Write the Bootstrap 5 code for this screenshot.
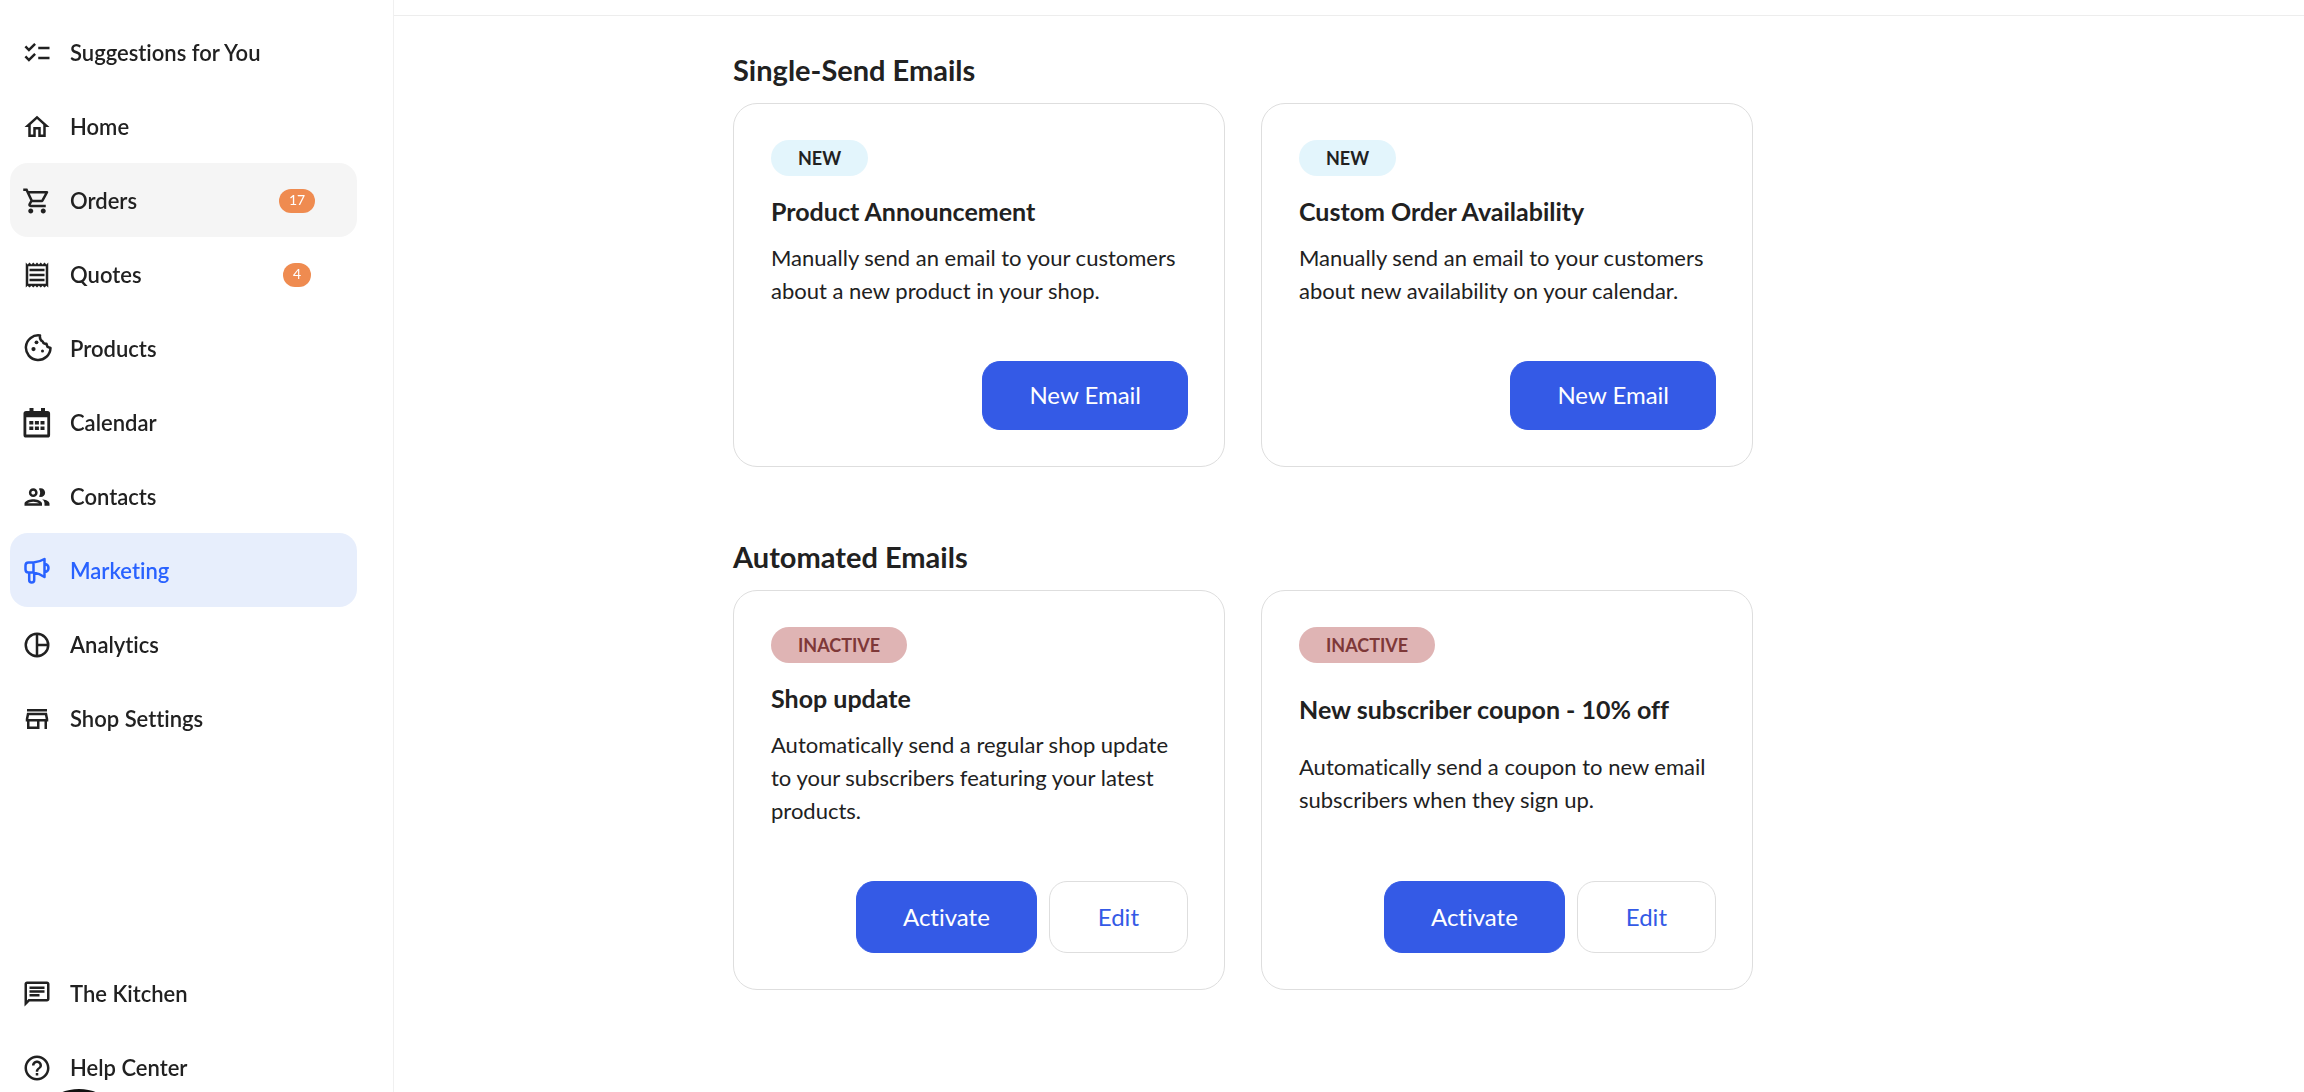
<!DOCTYPE html>
<html lang="en">
<head>
<meta charset="utf-8">
<meta name="viewport" content="width=device-width, initial-scale=1">
<title>Marketing</title>
<link rel="stylesheet" href="https://cdn.jsdelivr.net/npm/bootstrap@5.3.0/dist/css/bootstrap.min.css">
<style>
body,button{font-variant-ligatures:none}
body{font-family:Lato,"Open Sans",sans-serif;color:#212121;background:#fff}
.side-col{width:394px;border-right:1px solid #f0f0f0;padding-top:15px}
.side-link{height:74px;margin-left:10px;margin-right:36px;padding-top:2px;padding-left:12px;padding-right:30px;gap:18px;border-radius:18px;font-size:22px;font-weight:600;line-height:28px;color:#212121;text-decoration:none}
.side-link:hover,.side-link.is-hover{background:#f5f5f5}
.side-link.is-current{background:#e7eefc;color:#2962ff}
.side-link svg{width:30px;height:30px;flex:none;fill:currentColor}
.side-link .line{fill:none;stroke:currentColor;stroke-linejoin:round}
.count-slot{width:60px}
.count-pill{background:#ef8b50;color:#fff;font-size:14px;font-weight:400;line-height:22px;padding:0 10px 2px;border-radius:12px}
.side-foot{margin-bottom:-12px}
.top-bar{height:16px;border-bottom:1px solid #ededed}
.page-wrap{max-width:1232px;padding:36px 0}
.mail-grid{max-width:1020px}
.mail-section + .mail-section{margin-top:72px}
.mail-section h2{font-size:29px;font-weight:700;line-height:36px;margin-bottom:15px}
.mail-row{--bs-gutter-x:36px}
.mail-card{border:1px solid #dedede;border-radius:24px;padding:36px 36px 36px 37px}
.mail-tag{font-size:18px;font-weight:700;line-height:36px;padding:0 27px;border-radius:18px}
.tag-new{background:#e3f5fc}
.tag-off{background:#dfb4b4;color:#7e3838}
.mail-card h3{font-size:25px;font-weight:700;line-height:30px;margin:20px 0 0}
.mail-card p{font-size:22px;line-height:33px;margin:15px 0 0}
.mail-actions{margin-top:54px;gap:12px}
.mail-btn{font-size:24px;line-height:34px;border-radius:18px;padding:18px 48px;border:1px solid #dedede;color:#345ae6}
.mail-btn.is-main{background:#345ae6;border-color:#345ae6;color:#fff;padding-left:46px;padding-right:46px}
.mail-btn.is-low{padding-top:16px;padding-bottom:17px}
.help-bubble{position:fixed;left:31px;bottom:-93px;width:96px;height:96px;border:0;border-radius:50%;background:#111}
</style>
<script src="https://cdn.jsdelivr.net/npm/bootstrap@5.3.0/dist/js/bootstrap.bundle.min.js"></script>
</head>
<body>
<div class="d-flex min-vh-100">
  <nav class="side-col vh-100 sticky-top overflow-hidden flex-shrink-0 d-flex flex-column" aria-label="Main">
    <div class="d-flex flex-column">
      <a href="#" class="side-link d-flex align-items-center"><svg viewBox="0 0 24 24"><path d="M22 7h-9v2h9V7zm0 8h-9v2h9v-2zM5.54 11 2 7.46l1.41-1.41 2.12 2.12 4.24-4.24 1.41 1.41L5.54 11zm0 8L2 15.46l1.41-1.41 2.12 2.12 4.24-4.24 1.41 1.41L5.54 19z"/></svg>Suggestions for You</a>
      <a href="#" class="side-link d-flex align-items-center"><svg viewBox="0 0 24 24"><path d="M12 5.69l5 4.5V18h-2v-6H9v6H7v-7.81l5-4.5M12 3L2 12h3v8h6v-6h2v6h6v-8h3L12 3z"/></svg>Home</a>
      <a href="#" class="side-link is-hover d-flex align-items-center"><svg viewBox="0 0 24 24"><path d="M15.55 13c.75 0 1.41-.41 1.75-1.03l3.58-6.49c.37-.66-.11-1.48-.87-1.48H5.21l-.94-2H1v2h2l3.6 7.59-1.35 2.44C4.52 15.37 5.48 17 7 17h12v-2H7l1.1-2h7.45zM6.16 6h12.15l-2.76 5H8.53L6.16 6zM7 18c-1.1 0-1.99.9-1.99 2S5.9 22 7 22s2-.9 2-2-.9-2-2-2zm10 0c-1.1 0-1.99.9-1.99 2s.89 2 1.99 2 2-.9 2-2-.9-2-2-2z"/></svg>Orders<span class="count-slot ms-auto d-flex justify-content-center"><span class="count-pill">17</span></span></a>
      <a href="#" class="side-link d-flex align-items-center"><svg viewBox="0 0 24 24"><path d="M19.5 3.5 18 2l-1.5 1.5L15 2l-1.5 1.5L12 2l-1.5 1.5L9 2 7.5 3.5 6 2 4.5 3.5 3 2v20l1.5-1.5L6 22l1.5-1.5L9 22l1.5-1.5L12 22l1.5-1.5L15 22l1.5-1.5L18 22l1.5-1.5L21 22V2l-1.5 1.5zM19 19.09H5V4.91h14v14.18zM6 15h12v2H6zm0-4h12v2H6zm0-4h12v2H6z"/></svg>Quotes<span class="count-slot ms-auto d-flex justify-content-center"><span class="count-pill">4</span></span></a>
      <a href="#" class="side-link d-flex align-items-center"><svg viewBox="0 0 30 30"><path class="line" d="M18 1.500A12.300 12.300 0 1 0 28.500 14L25.500 12.800L24.500 9.800Q21.500 10.300 20.700 7.500Q17.300 5.800 18 1.500Z" stroke-width="2.500"/><circle cx="14.500" cy="8.300" r="1.900"/><circle cx="11.500" cy="15.100" r="2.100"/><circle cx="20.500" cy="17.100" r="1.500"/></svg>Products</a>
      <a href="#" class="side-link d-flex align-items-center"><svg viewBox="0 0 30 30"><path fill-rule="evenodd" d="M7.500 0h4v3h7.500v-3h4v3h2.500a2.600 2.600 0 0 1 2.600 2.600v21.300a2.600 2.600 0 0 1-2.600 2.600H4.100a2.600 2.600 0 0 1-2.600-2.600V5.600A2.600 2.600 0 0 1 4.100 3h3.400zM4.300 9.300v17.300h21V9.300z"/><path d="M7.300 13h4v3.600h-4zm5.600 0h4v3.600h-4zm5.600 0h4v3.600h-4zm-11.200 5.500h4v3.600h-4zm5.600 0h4v3.600h-4zm5.600 0h4v3.600h-4z"/></svg>Calendar</a>
      <a href="#" class="side-link d-flex align-items-center"><svg viewBox="0 0 24 24"><path d="M9 13.750c-2.340 0-7 1.170-7 3.500V19h14v-1.750c0-2.330-4.660-3.500-7-3.500zM4.340 17c.84-.58 2.870-1.250 4.660-1.250s3.820.67 4.660 1.250H4.340zM9 12c1.930 0 3.500-1.570 3.500-3.500S10.930 5 9 5 5.500 6.570 5.500 8.500 7.070 12 9 12zm0-5c.83 0 1.500.67 1.500 1.500S9.830 10 9 10s-1.500-.67-1.500-1.500S8.170 7 9 7zm7.040 6.810c1.160.84 1.960 1.960 1.960 3.440V19h4v-1.750c0-2.020-3.500-3.170-5.960-3.440zM15 12c1.930 0 3.500-1.570 3.500-3.500S16.930 5 15 5c-.54 0-1.040.13-1.500.35.63.89 1 1.980 1 3.150s-.37 2.260-1 3.150c.46.22.96.35 1.500.35z"/></svg>Contacts</a>
      <a href="#" class="side-link is-current d-flex align-items-center" aria-current="page"><svg viewBox="0 0 30 30"><path class="line" stroke-width="2.500" d="M11.500 6.500H6.500Q3.500 6.500 3.500 9.500V13.500Q3.500 16.500 6.500 16.500H11.500ZM11.500 6.500Q17.500 6 22.500 3V21Q17.500 17.500 11.500 16.500ZM7.200 16.800V24Q7.200 26.500 9.700 26.500T12.200 24V16.800M22.800 8Q26.500 8.500 26.500 12T22.800 16"/></svg>Marketing</a>
      <a href="#" class="side-link d-flex align-items-center"><svg viewBox="0 0 24 24"><path class="line" stroke-width="2" d="M12 3a9 9 0 1 0 0 18a9 9 0 0 0 0-18zM12 3v18M12 12h9"/></svg>Analytics</a>
      <a href="#" class="side-link d-flex align-items-center"><svg viewBox="0 0 24 24"><path d="M18.360 9l.6 3H5.040l.6-3h12.720M20 4H4v2h16V4zm0 3H4l-1 5v2h1v6h10v-6h4v6h2v-6h1v-2l-1-5zM6 18v-4h6v4H6z"/></svg>Shop Settings</a>
    </div>
    <div class="side-foot mt-auto d-flex flex-column">
      <a href="#" class="side-link d-flex align-items-center"><svg viewBox="0 0 24 24"><path d="M4 4h16v12H5.170L4 17.170V4m0-2c-1.100 0-1.990.9-1.990 2L2 22l4-4h14c1.100 0 2-.9 2-2V4c0-1.100-.9-2-2-2H4zm2 10h8v2H6v-2zm0-3h12v2H6V9zm0-3h12v2H6V6z"/></svg>The Kitchen</a>
      <a href="#" class="side-link d-flex align-items-center"><svg viewBox="0 0 24 24"><path d="M11 18h2v-2h-2v2zm1-16C6.480 2 2 6.480 2 12s4.480 10 10 10 10-4.480 10-10S17.520 2 12 2zm0 18c-4.410 0-8-3.590-8-8s3.590-8 8-8 8 3.590 8 8-3.590 8-8 8zm0-14c-2.210 0-4 1.790-4 4h2c0-1.100.9-2 2-2s2 .9 2 2c0 2-3 1.750-3 5h2c0-2.250 3-2.500 3-5 0-2.210-1.790-4-4-4z"/></svg>Help Center</a>
    </div>
  </nav>

  <div class="flex-grow-1">
    <header class="top-bar"></header>
    <main class="page-wrap mx-auto">
      <div class="mail-grid">
        <section class="mail-section">
          <h2>Single-Send Emails</h2>
          <div class="row mail-row">
            <div class="col-6">
              <article class="mail-card h-100 d-flex flex-column justify-content-between">
                <span class="mail-tag tag-new align-self-start">NEW</span>
                <h3>Product Announcement</h3>
                <p>Manually send an email to your customers about a new product in your shop.</p>
                <div class="mail-actions d-flex justify-content-end"><button type="button" class="btn mail-btn is-main is-low">New Email</button></div>
              </article>
            </div>
            <div class="col-6">
              <article class="mail-card h-100 d-flex flex-column justify-content-between">
                <span class="mail-tag tag-new align-self-start">NEW</span>
                <h3>Custom Order Availability</h3>
                <p>Manually send an email to your customers about new availability on your calendar.</p>
                <div class="mail-actions d-flex justify-content-end"><button type="button" class="btn mail-btn is-main is-low">New Email</button></div>
              </article>
            </div>
          </div>
        </section>
        <section class="mail-section">
          <h2>Automated Emails</h2>
          <div class="row mail-row">
            <div class="col-6">
              <article class="mail-card h-100 d-flex flex-column justify-content-between">
                <span class="mail-tag tag-off align-self-start">INACTIVE</span>
                <h3>Shop update</h3>
                <p>Automatically send a regular shop update to your subscribers featuring your latest products.</p>
                <div class="mail-actions d-flex justify-content-end"><button type="button" class="btn mail-btn is-main">Activate</button><button type="button" class="btn mail-btn">Edit</button></div>
              </article>
            </div>
            <div class="col-6">
              <article class="mail-card h-100 d-flex flex-column justify-content-between">
                <span class="mail-tag tag-off align-self-start">INACTIVE</span>
                <h3>New subscriber coupon - 10% off</h3>
                <p>Automatically send a coupon to new email subscribers when they sign up.</p>
                <div class="mail-actions d-flex justify-content-end"><button type="button" class="btn mail-btn is-main">Activate</button><button type="button" class="btn mail-btn">Edit</button></div>
              </article>
            </div>
          </div>
        </section>
      </div>
    </main>
  </div>
</div>
<button type="button" class="help-bubble" aria-label="Open chat"></button>
</body>
</html>
